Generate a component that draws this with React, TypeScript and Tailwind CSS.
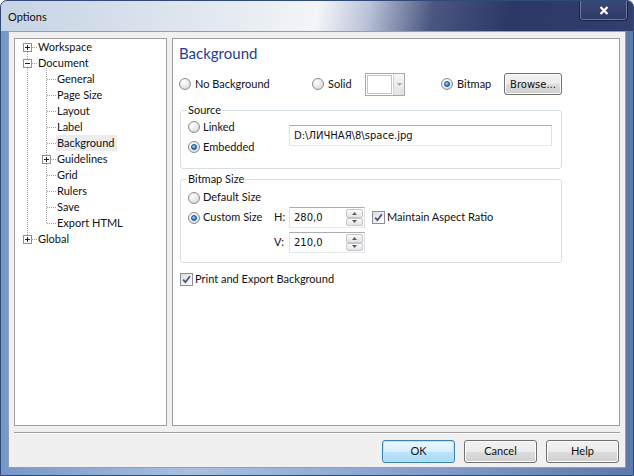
import React from "react";

type TreeRow = { label: string; level: 0 | 1; box?: "plus" | "minus"; selected?: boolean };

const treeRows: TreeRow[] = [
  { label: "Workspace", level: 0, box: "plus" },
  { label: "Document", level: 0, box: "minus" },
  { label: "General", level: 1 },
  { label: "Page Size", level: 1 },
  { label: "Layout", level: 1 },
  { label: "Label", level: 1 },
  { label: "Background", level: 1, selected: true },
  { label: "Guidelines", level: 1, box: "plus" },
  { label: "Grid", level: 1 },
  { label: "Rulers", level: 1 },
  { label: "Save", level: 1 },
  { label: "Export HTML", level: 1 },
  { label: "Global", level: 0, box: "plus" },
];

const rowY = (i: number) => 8.5 + 16 * i;

function ExpandBox({ cx, cy, plus }: { cx: number; cy: number; plus?: boolean }) {
  return (
    <g>
      <rect x={cx - 4} y={cy - 4} width="8" height="8" fill="white" stroke="#919191" />
      <line x1={cx - 2.5} y1={cy} x2={cx + 2.5} y2={cy} stroke="#1f1f1f" />
      {plus && <line x1={cx} y1={cy - 2.5} x2={cx} y2={cy + 2.5} stroke="#1f1f1f" />}
    </g>
  );
}

function TreeLines() {
  const dots = { stroke: "#a0a0a0", strokeDasharray: "1 1" };
  return (
    <svg className="pointer-events-none absolute left-0 top-0" width="151" height="386">
      <line x1="12.5" y1="13" x2="12.5" y2="196" {...dots} />
      <line x1="31.5" y1="29" x2="31.5" y2={rowY(11)} {...dots} />
      {treeRows.map((r, i) =>
        r.level === 0 ? (
          <line key={i} x1="17" y1={rowY(i)} x2="22" y2={rowY(i)} {...dots} />
        ) : (
          <line key={i} x1={r.box ? 36 : 32} y1={rowY(i)} x2="41" y2={rowY(i)} {...dots} />
        )
      )}
      {treeRows.map((r, i) =>
        r.box ? (
          <ExpandBox key={"b" + i} cx={r.level === 0 ? 12.5 : 31.5} cy={rowY(i)} plus={r.box === "plus"} />
        ) : null
      )}
    </svg>
  );
}

function Radio({ checked }: { checked?: boolean }) {
  return (
    <span className="flex h-[12px] w-[12px] shrink-0 items-center justify-center rounded-full border border-[#8c8c8c] bg-[radial-gradient(circle_at_35%_30%,#ffffff_0%,#ececec_45%,#cfcfcf_100%)]">
      {checked && (
        <span className="h-[6px] w-[6px] rounded-full border border-[#1b4f8a] bg-[radial-gradient(circle_at_40%_35%,#b7e3fb_0%,#3d92d4_50%,#18508f_100%)]" />
      )}
    </span>
  );
}

function Checkbox() {
  return (
    <span className="flex h-[13px] w-[13px] shrink-0 items-center justify-center border border-[#8e8f8f] bg-[linear-gradient(135deg,#dcdcdc,#ffffff)]">
      <svg width="9" height="9" viewBox="0 0 9 9">
        <path d="M1.2 4.6 L3.4 7.2 L7.9 1.2" fill="none" stroke="#3d4f8c" strokeWidth="1.7" />
      </svg>
    </span>
  );
}

function SpinButton({ up }: { up?: boolean }) {
  return (
    <div className="flex flex-1 items-center justify-center rounded-[2px] border border-[#c6c6c6] bg-[linear-gradient(#fafafa,#e4e4e4)]">
      <svg width="5" height="3" viewBox="0 0 5 3">
        <path d={up ? "M0 3 L2.5 0 L5 3 Z" : "M0 0 L2.5 3 L5 0 Z"} fill="#5c5c5c" />
      </svg>
    </div>
  );
}

function Spin({ value }: { value: string }) {
  return (
    <div className="flex h-[21px] w-[76px] border border-[#abadb3] border-b-[#e3e9ef] border-l-[#e2e3ea] border-r-[#dbdfe6] bg-white">
      <span className="flex-1 pl-[4px] font-['DejaVu_Sans',sans-serif] text-[10px] leading-[19px]">{value}</span>
      <div className="my-px mr-px flex w-[17px] flex-col">
        <SpinButton up />
        <SpinButton />
      </div>
    </div>
  );
}

function DialogButton({ label, primary }: { label: string; primary?: boolean }) {
  return (
    <button
      className={
        primary
          ? "h-[23px] w-[73px] rounded-[3px] border border-[#3c7fb1] bg-[linear-gradient(#eaf6fd_0%,#d9f0fc_50%,#bee6fd_50%,#a7d9f5_100%)] shadow-[inset_0_0_0_1px_#b8e3fb]"
          : "h-[23px] w-[73px] rounded-[3px] border border-[#707070] bg-[linear-gradient(#f2f2f2_0%,#ebebeb_50%,#dddddd_50%,#cfcfcf_100%)] shadow-[inset_0_0_0_1px_#fcfcfc]"
      }
    >
      {label}
    </button>
  );
}

export default function App() {
  return (
    <div className="flex h-[476px] w-[634px] flex-col overflow-hidden rounded-t-[7px] border border-[#2f4a78] bg-[linear-gradient(90deg,#7597c8,#a9c0df_30%,#8aa6cf_60%,#5d79aa)] font-['Lato',sans-serif] text-[11px] text-[#111]">
      <div className="flex h-[30px] shrink-0 items-start justify-between bg-[linear-gradient(100deg,#c5d3e4_0%,#dfe6ef_30%,#f3f5f8_50%,#b9c2d8_58%,#4b5781_68%,#2c3866_80%,#323f6e_100%)] pl-[7px] pr-[5px]">
        <span className="mt-[9px] text-[11px] leading-[14px]">Options</span>
        <div className="-mt-px flex h-[21px] w-[49px] items-center justify-center rounded-b-[4px] border border-t-0 border-[#1c2546] bg-[linear-gradient(#3c4877,#2c3866)] shadow-[inset_0_0_0_1px_rgba(255,255,255,0.3)]">
          <svg width="10" height="9" viewBox="0 0 10 9">
            <path d="M1.5 1 L8.5 8 M8.5 1 L1.5 8" stroke="white" strokeWidth="2.2" />
          </svg>
        </div>
      </div>

      <div className="flex min-h-0 flex-1 px-[7px] pb-[7px]">
        <div className="flex flex-1 flex-col border border-[#8aa0bf] bg-[#f0f0f0] px-[5px] pt-[6px]">
          <div className="flex h-[388px] gap-[5px]">
            <div className="relative w-[153px] border border-[#a0a0a0] bg-white">
              <TreeLines />
              {treeRows.map((r, i) => (
                <div
                  key={i}
                  className={"flex h-[16px] items-center leading-[16px] " + (r.level === 0 ? "pl-[23px]" : "pl-[41px]")}
                >
                  <span className={r.level === 1 ? (r.selected ? "bg-[#ececec] pl-px pr-[2px]" : "pl-px") : ""}>
                    {r.label}
                  </span>
                </div>
              ))}
            </div>

            <div className="flex w-[448px] flex-col border border-[#a0a0a0] bg-white pl-[6px] pt-[4px]">
              <h1 className="text-[15px] leading-[20px] text-[#1e3d8f]">Background</h1>

              <div className="mt-[9px] flex h-[24px] items-center">
                <label className="flex w-[133px] items-center gap-[4px]">
                  <Radio />
                  No Background
                </label>
                <label className="flex w-[53px] items-center gap-[4px]">
                  <Radio />
                  Solid
                </label>
                <div className="flex h-[23px] w-[40px] border border-[#a9a9a9] bg-white">
                  <div className="m-px flex-1 border border-[#c4c4c4] bg-white" />
                  <div className="flex w-[11px] items-center justify-center border-l border-[#d4d4d4] bg-[linear-gradient(#f6f6f6,#e2e2e2)]">
                    <svg width="5" height="3" viewBox="0 0 5 3">
                      <path d="M0 0 L2.5 3 L5 0 Z" fill="#a8a8a8" />
                    </svg>
                  </div>
                </div>
                <label className="ml-[36px] flex w-[63px] items-center gap-[4px]">
                  <Radio checked />
                  Bitmap
                </label>
                <button className="h-[22px] w-[58px] rounded-[3px] border border-[#707070] bg-[linear-gradient(#f2f2f2_0%,#ebebeb_50%,#dddddd_50%,#cfcfcf_100%)] font-['DejaVu_Sans',sans-serif] text-[10px] shadow-[inset_0_0_0_1px_#fcfcfc]">
                  Browse...
                </button>
              </div>

              <fieldset className="ml-px mt-[7px] w-[382px] rounded-[3px] border border-[#d5dfe5] pb-[11px] pl-[7px]">
                <legend className="-ml-px px-px leading-[14px]">Source</legend>
                <div className="flex">
                  <div className="flex w-[101px] flex-col">
                    <label className="flex h-[20px] items-center gap-[3px]">
                      <Radio />
                      Linked
                    </label>
                    <label className="flex h-[20px] items-center gap-[3px]">
                      <Radio checked />
                      Embedded
                    </label>
                  </div>
                  <div className="mt-[8px] h-[21px] w-[263px] border border-[#abadb3] border-b-[#e3e9ef] border-l-[#e2e3ea] border-r-[#dbdfe6] bg-white pl-[4px] font-['DejaVu_Sans',sans-serif] text-[10px] leading-[19px]">
                    D:\ЛИЧНАЯ\8\space.jpg
                  </div>
                </div>
              </fieldset>

              <fieldset className="ml-px mt-[3px] w-[382px] rounded-[3px] border border-[#d5dfe5] pb-[9px] pl-[7px] pt-[2px]">
                <legend className="-ml-px px-px leading-[14px]">Bitmap Size</legend>
                <label className="flex h-[19px] items-center gap-[3px]">
                  <Radio />
                  Default Size
                </label>
                <div className="flex h-[21px] items-center">
                  <label className="flex w-[86px] items-center gap-[3px]">
                    <Radio checked />
                    Custom Size
                  </label>
                  <span className="w-[15px]">H:</span>
                  <Spin value="280,0" />
                  <label className="ml-[7px] flex items-center gap-[2px]">
                    <Checkbox />
                    Maintain Aspect Ratio
                  </label>
                </div>
                <div className="mt-[4px] flex h-[21px] items-center pl-[86px]">
                  <span className="w-[15px]">V:</span>
                  <Spin value="210,0" />
                </div>
              </fieldset>

              <label className="ml-px mt-[9px] flex h-[14px] items-center gap-[2px]">
                <Checkbox />
                Print and Export Background
              </label>
            </div>
          </div>

          <div className="mt-[6px] border-b border-t border-b-white border-t-[#a0a0a0]" />

          <div className="mt-[6px] flex justify-end gap-[9px] pr-px">
            <DialogButton label="OK" primary />
            <DialogButton label="Cancel" />
            <DialogButton label="Help" />
          </div>
        </div>
      </div>
    </div>
  );
}
